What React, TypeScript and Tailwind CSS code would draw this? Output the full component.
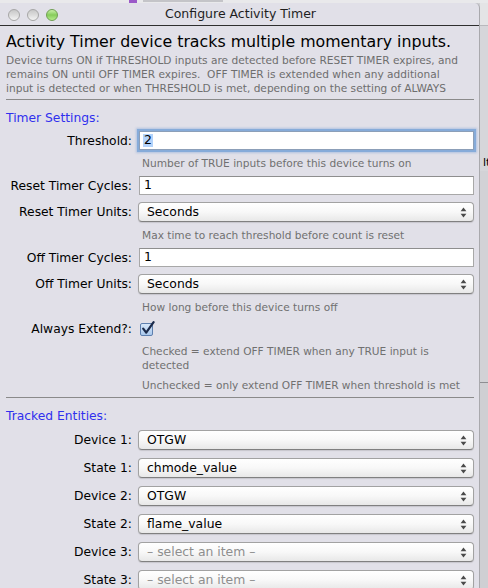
import React from "react";

function Arrows() {
  return (
    <svg width="7" height="11" viewBox="0 0 7 11" className="shrink-0">
      <path d="M3.5 0.6 L6.4 4.2 H0.6 Z" fill="#4a4a4a" />
      <path d="M3.5 10.4 L6.4 6.8 H0.6 Z" fill="#4a4a4a" />
    </svg>
  );
}

function Select({ value, placeholder }: { value: string; placeholder?: boolean }) {
  return (
    <div className="h-[20px] w-[336px] -ml-px rounded-[4px] border border-[#a2a2a2] border-b-[#808080] bg-gradient-to-b from-white via-[#f8f8f8] to-[#e8e8e8] shadow-[0_1px_1px_rgba(0,0,0,0.12)] flex items-center pl-[8px] pr-[6px]">
      <span
        className={
          placeholder
            ? "flex-1 text-[12.4px] leading-none text-[#8e8e8e] whitespace-nowrap"
            : "flex-1 text-[12.4px] leading-none text-black whitespace-nowrap"
        }
      >
        {value}
      </span>
      <Arrows />
    </div>
  );
}

function TextInput({ value, focused }: { value: string; focused?: boolean }) {
  return (
    <div
      className={
        focused
          ? "h-[19px] bg-white border border-[#8c9fb8] flex items-center pl-[3px] text-[12.4px] leading-none text-black shadow-[0_0_0_2px_#86abd9,0_0_2px_3px_rgba(120,160,215,0.45)]"
          : "h-[19px] bg-white border border-[#a8a8a8] border-t-[#8e8e8e] flex items-center pl-[4px] text-[12.4px] leading-none text-black"
      }
    >
      {focused ? <span className="bg-[#b3d3fb] px-px">{value}</span> : <span>{value}</span>}
    </div>
  );
}

function Row({
  label,
  children,
  className,
}: {
  label: string;
  children: React.ReactNode;
  className: string;
}) {
  return (
    <div className={"grid grid-cols-[126px_335px] gap-x-[7px] items-center " + className}>
      <div className="text-right text-[12.3px] leading-[16px] text-black whitespace-nowrap">{label}</div>
      {children}
    </div>
  );
}

function Hint({ children, className }: { children: React.ReactNode; className: string }) {
  return (
    <div className={"grid grid-cols-[126px_335px] gap-x-[7px] " + className}>
      <div />
      <div className="pl-[3px] text-[10.6px] leading-[14px] text-[#707070] whitespace-nowrap">{children}</div>
    </div>
  );
}

function Light({ green }: { green?: boolean }) {
  return (
    <div
      className={
        green
          ? "w-[12px] h-[12px] rounded-full border border-[#6f9f52] bg-gradient-to-b from-[#c9f0a8] via-[#86cc5a] to-[#b5ec8c]"
          : "w-[12px] h-[12px] rounded-full border border-[#a6a6a6] bg-gradient-to-b from-[#c8c8c8] via-[#dcdcdc] to-[#f4f4f4]"
      }
    />
  );
}

function Checkbox() {
  return (
    <div className="relative w-[14px] h-[14px]">
      <div className="w-[13px] h-[13px] mt-[1px] rounded-[2px] border border-[#5d7fae] bg-gradient-to-b from-[#d7e7f9] to-[#a9c8ec]" />
      <svg className="absolute -top-[2px] left-[1px]" width="14" height="15" viewBox="0 0 14 15">
        <path d="M2.2 7.6 L5.2 11.6 L12.6 1.2" fill="none" stroke="#1b2a4a" strokeWidth="2.2" strokeLinecap="round" strokeLinejoin="round" />
      </svg>
    </div>
  );
}

export default function App() {
  return (
    <div className="w-[488px] h-[588px] overflow-hidden bg-[#cfcfd3] flex flex-col font-['DejaVu_Sans','Liberation_Sans',sans-serif]">
      <div className="h-[3px] shrink-0 bg-[#e9e9eb] flex">
        <div className="ml-[129px] w-[8px] h-[3px] bg-[#9b59c8]" />
        <div className="ml-[6px] w-[80px] h-[2px] bg-[#c4c4c8]" />
      </div>
      <div className="flex flex-1 min-h-0">
        <div className="w-[480px] shrink-0 bg-[#e1e0e8] rounded-tr-[5px] border-r border-[#a9a9ad] flex flex-col">
          <div className="h-[23px] shrink-0 border-b border-[#2f2f2f] grid grid-cols-[90px_1fr_90px] items-center">
            <div className="flex items-center gap-[7px] pl-[8px] pt-[1px]">
              <Light />
              <Light />
              <Light green />
            </div>
            <div className="text-center text-[12.5px] leading-none text-[#1e1e1e] whitespace-nowrap pl-[2px]">
              Configure Activity Timer
            </div>
            <div />
          </div>

          <div className="pl-[6px] pr-[5px] flex flex-col">
            <div className="mt-[7px] text-[15.8px] leading-[18px] text-black whitespace-nowrap">
              Activity Timer device tracks multiple momentary inputs.
            </div>
            <div className="mt-[2px] text-[10.6px] leading-[14px] text-[#6e6e6e] whitespace-nowrap">
              Device turns ON if THRESHOLD inputs are detected before RESET TIMER expires, and
              <br />
              remains ON until OFF TIMER expires.&nbsp; OFF TIMER is extended when any additional
              <br />
              input is detected or when THRESHOLD is met, depending on the setting of ALWAYS
            </div>
            <div className="mt-[4px] h-px w-[468px] bg-[#8a8a8a]" />

            <div className="mt-[9px] text-[12.3px] leading-[18px] text-[#3030ee] whitespace-nowrap">Timer Settings:</div>

            <Row label="Threshold:" className="mt-[4px]">
              <TextInput value="2" focused />
            </Row>
            <Hint className="mt-[6px]">Number of TRUE inputs before this device turns on</Hint>
            <Row label="Reset Timer Cycles:" className="mt-[6px]">
              <TextInput value="1" />
            </Row>
            <Row label="Reset Timer Units:" className="mt-[7px]">
              <Select value="Seconds" />
            </Row>
            <Hint className="mt-[6px]">Max time to reach threshold before count is reset</Hint>
            <Row label="Off Timer Cycles:" className="mt-[6px]">
              <TextInput value="1" />
            </Row>
            <Row label="Off Timer Units:" className="mt-[7px]">
              <Select value="Seconds" />
            </Row>
            <Hint className="mt-[6px]">How long before this device turns off</Hint>
            <Row label="Always Extend?:" className="mt-[6px] h-[18px]">
              <div className="pl-[1px]">
                <Checkbox />
              </div>
            </Row>
            <Hint className="mt-[7px]">
              <div className="leading-[13.5px]">
                Checked = extend OFF TIMER when any TRUE input is
                <br />
                detected
              </div>
            </Hint>
            <Hint className="mt-[6px]">Unchecked = only extend OFF TIMER when threshold is met</Hint>
            <div className="mt-[5px] h-px w-[468px] bg-[#8a8a8a]" />

            <div className="mt-[9px] text-[12.3px] leading-[18px] text-[#3030ee] whitespace-nowrap">Tracked Entities:</div>

            <Row label="Device 1:" className="mt-[5px]">
              <Select value="OTGW" />
            </Row>
            <Row label="State 1:" className="mt-[8px]">
              <Select value="chmode_value" />
            </Row>
            <Row label="Device 2:" className="mt-[8px]">
              <Select value="OTGW" />
            </Row>
            <Row label="State 2:" className="mt-[8px]">
              <Select value="flame_value" />
            </Row>
            <Row label="Device 3:" className="mt-[8px]">
              <Select value="– select an item –" placeholder />
            </Row>
            <Row label="State 3:" className="mt-[8px]">
              <Select value="– select an item –" placeholder />
            </Row>
          </div>
        </div>
        <div className="flex-1 flex flex-col">
          <div className="h-[22px] bg-[#e4e4e6]" />
          <div className="h-px bg-[#b8b8bc]" />
          <div className="h-[129px] bg-[#d6d6da]" />
          <div className="h-[16px] bg-[#d6d6da] text-[11px] leading-[16px] text-black pl-[3px] whitespace-nowrap overflow-hidden">lt</div>
          <div className="h-[211px] bg-[#d2d2d6]" />
          <div className="h-px bg-[#8e8e92]" />
          <div className="flex-1 bg-[#cfcfd3]" />
        </div>
      </div>
    </div>
  );
}
